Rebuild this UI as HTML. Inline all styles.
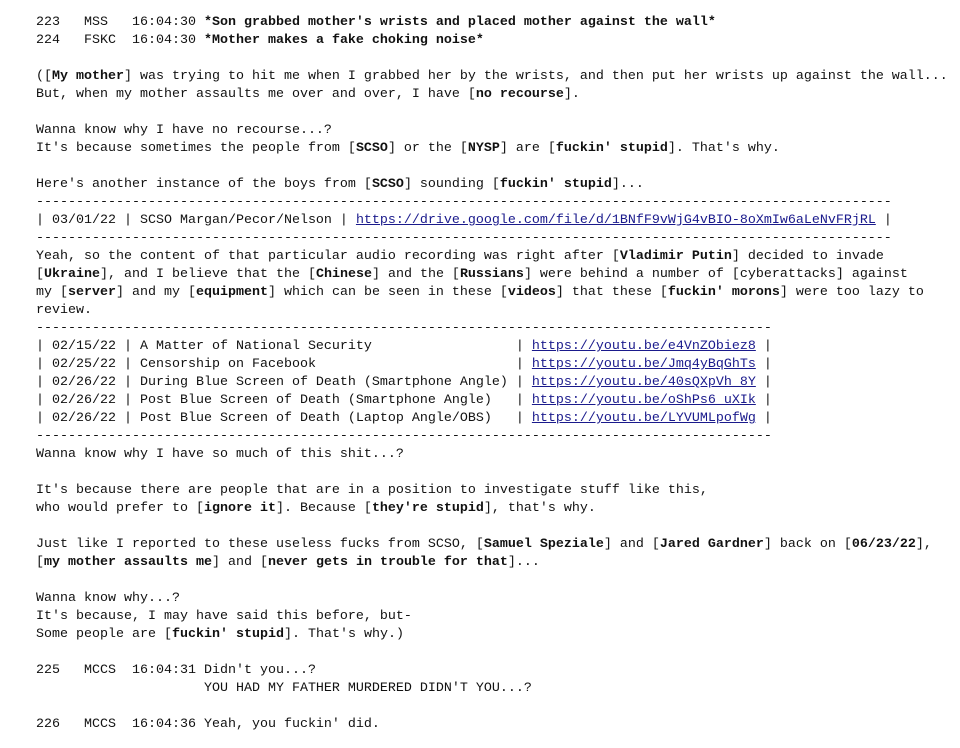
<!DOCTYPE html>
<html><head><meta charset="utf-8"><style>
html,body{margin:0;background:#fff;}
pre{margin:0;padding:14px 0 0 36px;font-family:"Liberation Mono",monospace;font-size:13.33px;line-height:18px;color:#111;}
b{font-weight:bold;}
a{color:#1a1a8c;text-decoration:underline;}
</style></head><body><pre>223   MSS   16:04:30 <b>*Son grabbed mother's wrists and placed mother against the wall*</b>
224   FSKC  16:04:30 <b>*Mother makes a fake choking noise*</b>

([<b>My mother</b>] was trying to hit me when I grabbed her by the wrists, and then put her wrists up against the wall...
But, when my mother assaults me over and over, I have [<b>no recourse</b>].

Wanna know why I have no recourse...?
It's because sometimes the people from [<b>SCSO</b>] or the [<b>NYSP</b>] are [<b>fuckin' stupid</b>]. That's why.

Here's another instance of the boys from [<b>SCSO</b>] sounding [<b>fuckin' stupid</b>]...
-----------------------------------------------------------------------------------------------------------
| 03/01/22 | SCSO Margan/Pecor/Nelson | <a>https://drive.google.com/file/d/1BNfF9vWjG4vBIO-8oXmIw6aLeNvFRjRL</a> |
-----------------------------------------------------------------------------------------------------------
Yeah, so the content of that particular audio recording was right after [<b>Vladimir Putin</b>] decided to invade
[<b>Ukraine</b>], and I believe that the [<b>Chinese</b>] and the [<b>Russians</b>] were behind a number of [cyberattacks] against
my [<b>server</b>] and my [<b>equipment</b>] which can be seen in these [<b>videos</b>] that these [<b>fuckin' morons</b>] were too lazy to
review.
--------------------------------------------------------------------------------------------
| 02/15/22 | A Matter of National Security                  | <a>https://youtu.be/e4VnZObiez8</a> |
| 02/25/22 | Censorship on Facebook                         | <a>https://youtu.be/Jmq4yBqGhTs</a> |
| 02/26/22 | During Blue Screen of Death (Smartphone Angle) | <a>https://youtu.be/40sQXpVh_8Y</a> |
| 02/26/22 | Post Blue Screen of Death (Smartphone Angle)   | <a>https://youtu.be/oShPs6_uXIk</a> |
| 02/26/22 | Post Blue Screen of Death (Laptop Angle/OBS)   | <a>https://youtu.be/LYVUMLpofWg</a> |
--------------------------------------------------------------------------------------------
Wanna know why I have so much of this shit...?

It's because there are people that are in a position to investigate stuff like this,
who would prefer to [<b>ignore it</b>]. Because [<b>they're stupid</b>], that's why.

Just like I reported to these useless fucks from SCSO, [<b>Samuel Speziale</b>] and [<b>Jared Gardner</b>] back on [<b>06/23/22</b>],
[<b>my mother assaults me</b>] and [<b>never gets in trouble for that</b>]...

Wanna know why...?
It's because, I may have said this before, but-
Some people are [<b>fuckin' stupid</b>]. That's why.)

225   MCCS  16:04:31 Didn't you...?
                     YOU HAD MY FATHER MURDERED DIDN'T YOU...?

226   MCCS  16:04:36 Yeah, you fuckin' did.
</pre></body></html>
